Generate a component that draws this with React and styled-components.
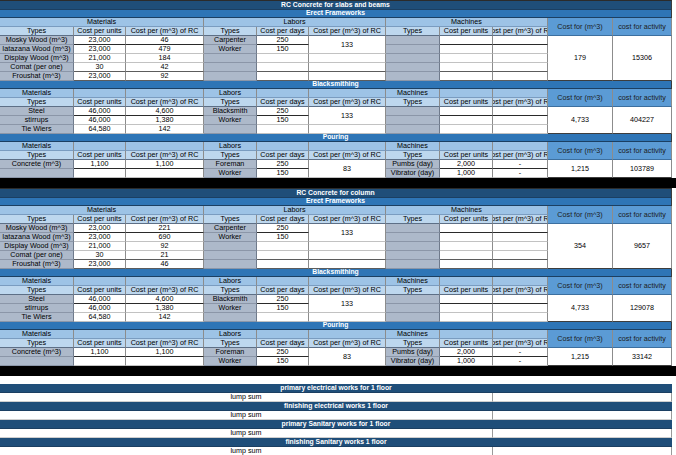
import React from 'react';
import styled, { createGlobalStyle } from 'styled-components';

const GlobalStyle = createGlobalStyle`
    html, body { margin: 0; padding: 0; background: #fff; }
    body { font-family: "Liberation Sans", Arial, sans-serif; }
`

const COLS = '74px 52px 78px 53px 52px 77px 54px 53px 55px 65px 59px';
const LINES = ['#2a2a2a', '#c2c2c2', '#c2c2c2', '#5c5c5c', '#5c5c5c'];

const Page = styled.div`
    width: 676px;
    display: flex;
    flex-direction: column;
`
const Sheet = styled.div`
    width: 672px;
    display: flex;
    flex-direction: column;
    border-top: 1px solid #2b2b2b;
    border-right: 1px solid #3d3d3d;
    box-sizing: border-box;
`
const Bar = styled.div`
    height: ${p => p.$h || 8}px;
    box-sizing: border-box;
    background-color: ${p => p.$dark ? '#1f4e79' : '#2e75b6'};
    border-bottom: 1px solid #1b3f62;
    color: #fff;
    font-size: 6.8px;
    font-weight: bold;
    line-height: 1;
    display: flex;
    align-items: center;
    justify-content: center;
    white-space: nowrap;
`
const Grid = styled.div`
    display: grid;
    grid-template-columns: ${COLS};
    grid-auto-rows: 9px;
`
const Cell = styled.div`
    grid-column: span ${p => p.$span || 1};
    grid-row: span ${p => p.$rows || 1};
    box-sizing: border-box;
    border-right: 1px solid #8c8c8c;
    border-bottom: 1px solid ${p => p.$line || '#8c8c8c'};
    display: flex;
    align-items: center;
    justify-content: center;
    overflow: hidden;
    white-space: nowrap;
    font-size: 7.2px;
    line-height: 1;
    color: #000;
`
const GroupHead = styled(Cell)`
    background-color: #9dc3e6;
    border-bottom-color: #7a9cc0;
`
const ColHead = styled(Cell)`
    background-color: #bdd7ee;
    border-bottom-color: #5d6f86;
`
const TypeCell = styled(Cell)`
    background-color: #adb9ca;
    border-bottom-color: #8b96a8;
    border-right-color: #6f7a8b;
`
const Value = styled(Cell)`
    background-color: #fff;
`
const TotalHead = styled(Cell)`
    background-color: #5b9bd5;
    color: #1c1c1c;
    border-bottom-color: #3c6f9f;
`
const Total = styled(Cell)`
    background-color: #fff;
    border-bottom-color: #3d3d3d;
`
const Divider = styled.div`
    width: 676px;
    height: 10px;
    background-color: #000;
`
const Summary = styled.div`
    width: 672px;
    margin-top: 8px;
    display: flex;
    flex-direction: column;
`
const LumpRow = styled.div`
    display: grid;
    grid-template-columns: 493px 179px;
    height: 9px;
`
const LumpCell = styled.div`
    box-sizing: border-box;
    border-right: 1px solid #9a9a9a;
    border-bottom: 1px solid #cfcfcf;
    display: flex;
    align-items: center;
    justify-content: center;
    font-size: 7.2px;
    color: #000;
    line-height: 1;
`

const HEADS = ['Types', 'Cost per units', 'Cost per (m^3) of RC', 'Types', 'Cost per days', 'Cost per (m^3) of RC', 'Types', 'Cost per units', 'Cost per (m^3) of RC'];

function Section({ title, merged, rows, laborRC, total, activity }) {
    return (
        <>
            <Bar>{title}</Bar>
            <Grid>
                {merged ? (
                    <>
                        <GroupHead $span={3}>Materials</GroupHead>
                        <GroupHead $span={3}>Labors</GroupHead>
                        <GroupHead $span={3}>Machines</GroupHead>
                    </>
                ) : (
                    ['Materials', '', '', 'Labors', '', '', 'Machines', '', ''].map((t, i) => (
                        <GroupHead key={i}>{t}</GroupHead>
                    ))
                )}
                <TotalHead $rows={2}>Cost for (m^3)</TotalHead>
                <TotalHead $rows={2}>cost for activity</TotalHead>
                {HEADS.map((h, i) => <ColHead key={i}>{h}</ColHead>)}
                {rows.map((r, i) => (
                    <React.Fragment key={i}>
                        <TypeCell>{r[0]}</TypeCell>
                        <Value $line={LINES[i]}>{r[1]}</Value>
                        <Value $line={LINES[i]}>{r[2]}</Value>
                        <TypeCell>{r[3]}</TypeCell>
                        <Value $line={LINES[i]}>{r[4]}</Value>
                        {i === 0 && <Value $rows={2} $line={LINES[1]}>{laborRC}</Value>}
                        {i >= 2 && <Value $line={LINES[i]} />}
                        <TypeCell>{r[5]}</TypeCell>
                        <Value $line={LINES[i]}>{r[6]}</Value>
                        <Value $line={LINES[i]}>{r[7]}</Value>
                        {i === 0 && (
                            <>
                                <Total $rows={rows.length}>{total}</Total>
                                <Total $rows={rows.length}>{activity}</Total>
                            </>
                        )}
                    </React.Fragment>
                ))}
            </Grid>
        </>
    )
}

const frameRows = (c) => [
    ['Mosky Wood (m^3)', '23,000', c[0], 'Carpenter', '250', '', '', ''],
    ['Iatazana Wood (m^3)', '23,000', c[1], 'Worker', '150', '', '', ''],
    ['Display Wood (m^3)', '21,000', c[2], '', '', '', '', ''],
    ['Comat (per one)', '30', c[3], '', '', '', '', ''],
    ['Froushat (m^3)', '23,000', c[4], '', '', '', '', ''],
];
const smithRows = [
    ['Steel', '46,000', '4,600', 'Blacksmith', '250', '', '', ''],
    ['stirrups', '46,000', '1,380', 'Worker', '150', '', '', ''],
    ['Tie Wiers', '64,580', '142', '', '', '', '', ''],
];
const pourRows = [
    ['Concrete (m^3)', '1,100', '1,100', 'Foreman', '250', 'Pumbs (day)', '2,000', '-'],
    ['', '', '', 'Worker', '150', 'Vibrator (day)', '1,000', '-'],
];

const BLOCKS = [
    {
        title: 'RC Concrete for slabs and beams',
        frame: ['46', '479', '184', '42', '92'],
        totals: [['179', '15306'], ['4,733', '404227'], ['1,215', '103789']],
    },
    {
        title: 'RC Concrete for column',
        frame: ['221', '690', '92', '21', '46'],
        totals: [['354', '9657'], ['4,733', '129078'], ['1,215', '33142']],
    },
];

const WORKS = [
    'primary electrical works for 1 floor',
    'finishing electrical works 1 floor',
    'primary Sanitary works for 1 floor',
    'finishing Sanitary works 1 floor',
];

function App() {
    return (
        <Page>
            <GlobalStyle/>
            {BLOCKS.map(b => (
                <React.Fragment key={b.title}>
                    <Sheet>
                        <Bar $dark $h={9}>{b.title}</Bar>
                        <Section title="Erect Frameworks" merged rows={frameRows(b.frame)} laborRC="133" total={b.totals[0][0]} activity={b.totals[0][1]}/>
                        <Section title="Blacksmithing" rows={smithRows} laborRC="133" total={b.totals[1][0]} activity={b.totals[1][1]}/>
                        <Section title="Pouring" rows={pourRows} laborRC="83" total={b.totals[2][0]} activity={b.totals[2][1]}/>
                    </Sheet>
                    <Divider/>
                </React.Fragment>
            ))}
            <Summary>
                {WORKS.map(w => (
                    <React.Fragment key={w}>
                        <Bar $dark $h={9}>{w}</Bar>
                        <LumpRow>
                            <LumpCell>lump sum</LumpCell>
                            <LumpCell/>
                        </LumpRow>
                    </React.Fragment>
                ))}
            </Summary>
        </Page>
    )
}

export default App
